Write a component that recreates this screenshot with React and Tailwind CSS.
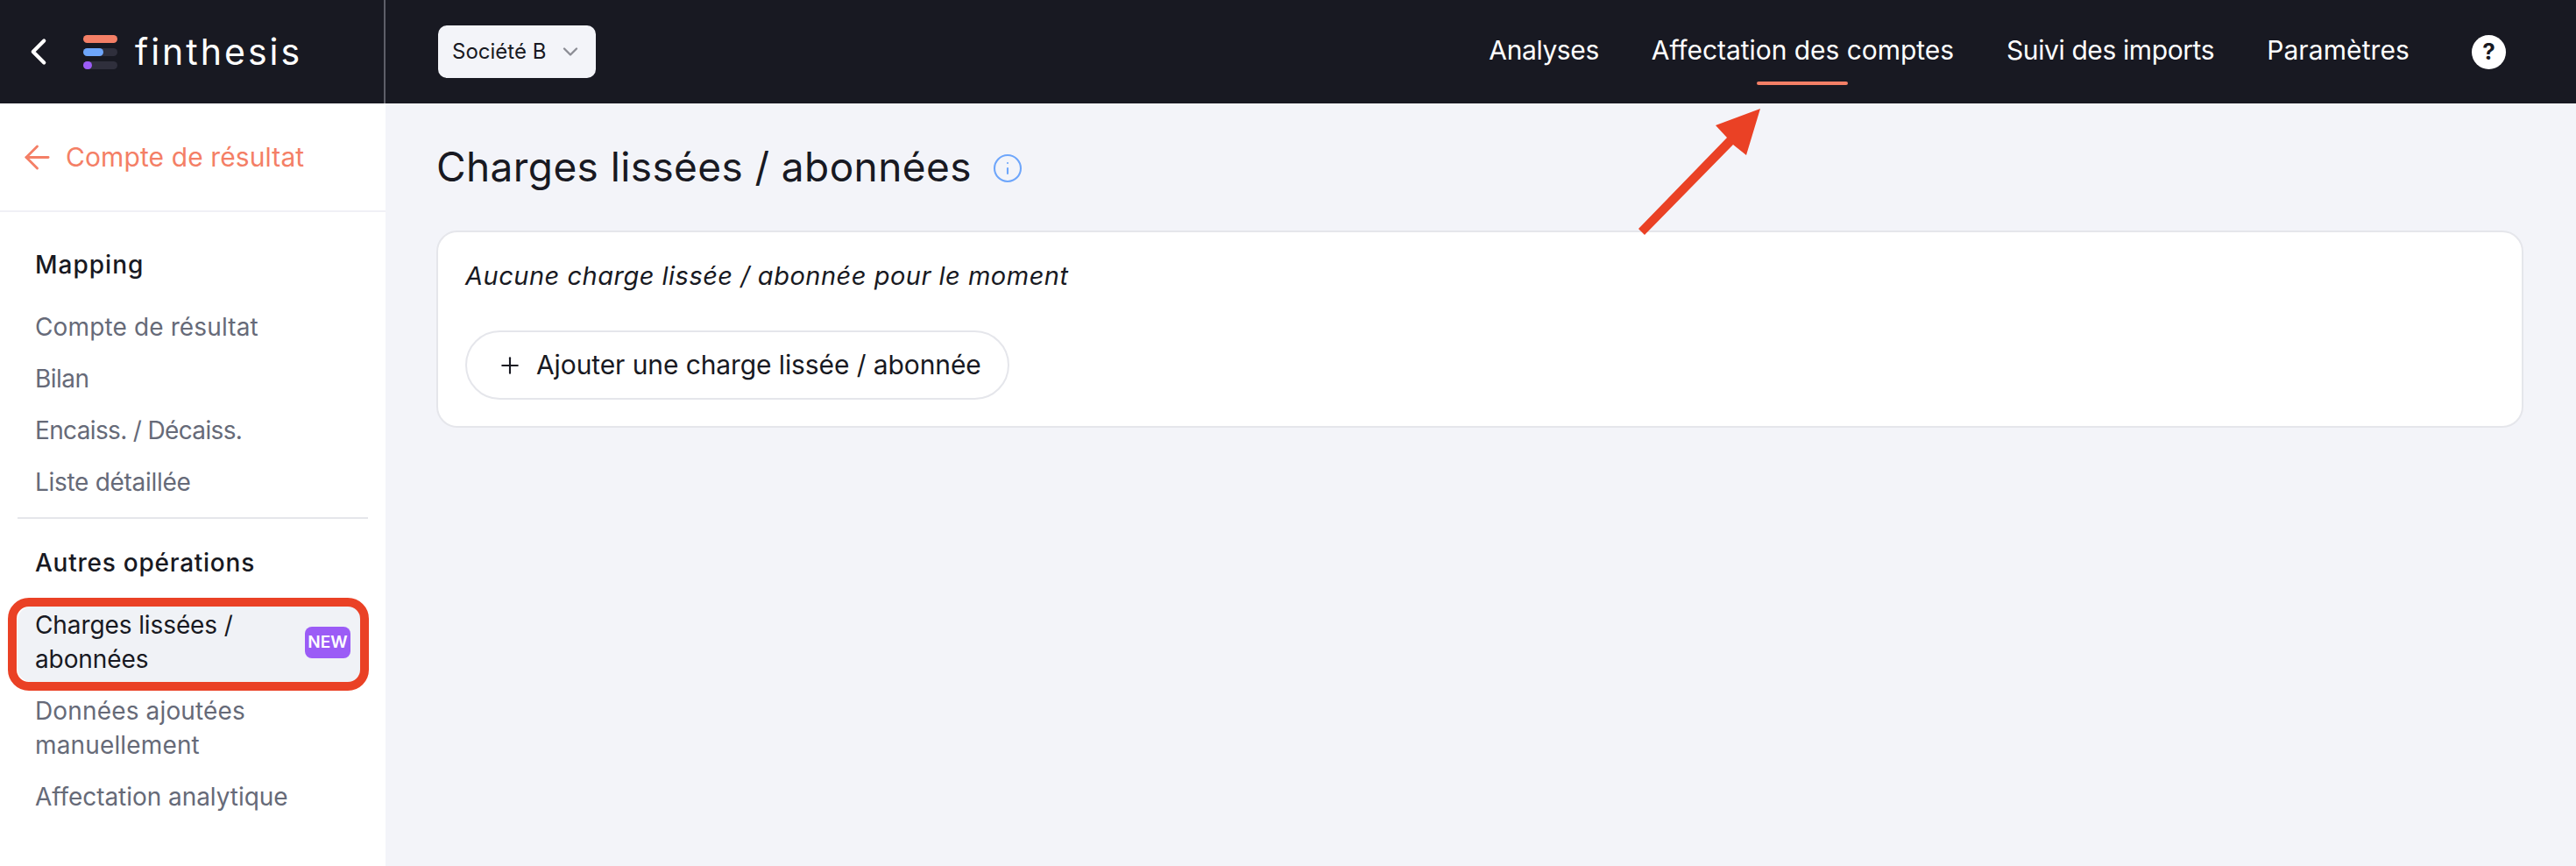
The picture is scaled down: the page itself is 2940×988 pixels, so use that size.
import { ArrowLeft, ChevronDown, ChevronLeft, Info, Plus } from "lucide-react";

const mappingLinks = [
    { label: "Compte de résultat", className: "tracking-[0.13px]" },
    { label: "Bilan", className: "tracking-[-0.55px]" },
    { label: "Encaiss. / Décaiss.", className: "tracking-[-0.65px]" },
    { label: "Liste détaillée", className: "tracking-[-0.3px]" },
];

function Logo() {
    return (
        <div className="flex w-[39px] flex-col gap-[6px]">
            <div className="h-[9px] rounded-full bg-[#f47f66]" />
            <div className="h-[9px] rounded-full bg-[#2f2f3c]">
                <div className="h-[9px] w-[23px] rounded-full bg-[#6ea6fb]" />
            </div>
            <div className="h-[9px] rounded-full bg-[#2f2f3c]">
                <div className="h-[9px] w-[10px] rounded-full bg-[#9b5cf6]" />
            </div>
        </div>
    );
}

function NavLink({ label, active, className }) {
    return (
        <a className={`relative -mt-[4px] text-[30px] leading-[40px] text-white ${className || ""}`}>
            {label}
            {active && <span className="absolute left-1/2 top-[56px] h-[4px] w-[104px] -translate-x-1/2 rounded-full bg-[#f47f66]" />}
        </a>
    );
}

function Header() {
    return (
        <header className="flex h-[118px] shrink-0 bg-[#181922]">
            <div className="flex w-[440px] shrink-0 items-center border-r-2 border-[#5d5e68]">
                <ChevronLeft className="ml-[19px] size-[50px] text-white" strokeWidth={2} />
                <div className="ml-[26px]">
                    <Logo />
                </div>
                <span className="ml-[20px] text-[41px] leading-none tracking-[3px] text-white">finthesis</span>
            </div>
            <div className="flex flex-1 items-center pl-[60px] pr-[80px]">
                <button className="flex h-[60px] w-[180px] items-center rounded-[10px] bg-[#f3f4f9] pl-4 text-[24px] text-[#181922]">
                    Société B
                    <ChevronDown className="ml-[14px] size-[28px] text-[#8b8c94]" strokeWidth={2} />
                </button>
                <nav className="ml-auto flex items-center gap-[60px]">
                    <NavLink label="Analyses" className="tracking-[-0.4px]" />
                    <NavLink label="Affectation des comptes" active className="tracking-[-0.05px]" />
                    <NavLink label="Suivi des imports" className="tracking-[-0.4px]" />
                    <NavLink label="Paramètres" className="tracking-[0.1px]" />
                    <div className="ml-[11px] flex size-[39px] items-center justify-center rounded-full bg-white text-[26px] font-bold leading-none text-[#181922]">?</div>
                </nav>
            </div>
        </header>
    );
}

function Sidebar() {
    return (
        <aside className="w-[440px] shrink-0 bg-white">
            <a className="flex h-[124px] items-center border-b-2 border-[#f0f0f6] pl-[21px] text-[30px] tracking-[0.1px] text-[#f47f66]">
                <ArrowLeft className="size-[43px]" strokeWidth={1.6} />
                <span className="ml-[11px]">Compte de résultat</span>
            </a>
            <h3 className="mt-10 pl-10 text-[28px] font-medium leading-[40px] tracking-[1px] text-[#181922]">Mapping</h3>
            <ul className="mt-[21px]">
                {mappingLinks.map((link) => (
                    <li key={link.label} className={`flex h-[59px] items-center pl-10 text-[28px] text-[#666a78] ${link.className}`}>{link.label}</li>
                ))}
            </ul>
            <div className="mx-5 mt-[11px] h-[2px] bg-[#e5e6eb]" />
            <h3 className="mt-[30px] pl-10 text-[28px] font-medium leading-[40px] tracking-[0.75px] text-[#181922]">Autres opérations</h3>
            <div className="relative mx-5 mt-[30px] flex h-[86px] items-center justify-between rounded-2xl bg-[#f0f2f6] pb-[4px] pl-5 pr-5">
                <span className="text-[28px] leading-[39px] tracking-[-0.1px] text-[#181922]">Charges lissées /<br />abonnées</span>
                <span className="flex h-[36px] w-[52px] items-center justify-center rounded-lg bg-[#9b5cf6] text-[19px] font-semibold text-white">NEW</span>
                <div className="absolute -bottom-[10px] -left-[11px] -right-px -top-[10px] rounded-[24px] border-[10px] border-[#ea4125]" />
            </div>
            <div className="mt-[14px] pl-10 text-[28px] leading-[39px] tracking-[0.15px] text-[#666a78]">Données ajoutées<br />manuellement</div>
            <div className="mt-[20px] pl-10 text-[28px] leading-[39px] tracking-[-0.05px] text-[#666a78]">Affectation analytique</div>
        </aside>
    );
}

function Arrow() {
    return (
        <svg className="pointer-events-none absolute left-[1860px] top-[115px]" width="160" height="160" viewBox="1860 115 160 160">
            <polygon points="2009,124 1958,143 1971,157 1870,261 1877,268 1978,165 1993,177" fill="#ea4125" />
        </svg>
    );
}

export default function App() {
    return (
        <div className="relative flex h-screen flex-col overflow-hidden bg-[#f3f4f9] font-['Inter',sans-serif]">
            <Header />
            <div className="flex flex-1">
                <Sidebar />
                <main className="flex-1 pl-[58px] pr-[60px] pt-[42px]">
                    <div className="flex h-[60px] items-center">
                        <h1 className="text-[46px] leading-[60px] tracking-[0.4px] text-[#181922]">Charges lissées / abonnées</h1>
                        <Info className="ml-[23px] mt-[4px] size-[36px] text-[#6ea6fb]" strokeWidth={1.4} />
                    </div>
                    <section className="mt-[43px] h-[225px] rounded-[24px] border-2 border-[#e5e6eb] bg-white pl-[31px] pt-[30px]">
                        <p className="text-[29px] italic leading-[40px] tracking-[0.5px] text-[#181922]">Aucune charge lissée / abonnée pour le moment</p>
                        <button className="mt-[42px] flex h-[79px] w-[621px] items-center rounded-full border-2 border-[#e5e6eb] bg-white pl-[34px] text-[30px] tracking-[-0.1px] text-[#181922]">
                            <Plus className="size-[30px]" strokeWidth={1.7} />
                            <span className="ml-[15px]">Ajouter une charge lissée / abonnée</span>
                        </button>
                    </section>
                </main>
            </div>
            <Arrow />
        </div>
    );
}
